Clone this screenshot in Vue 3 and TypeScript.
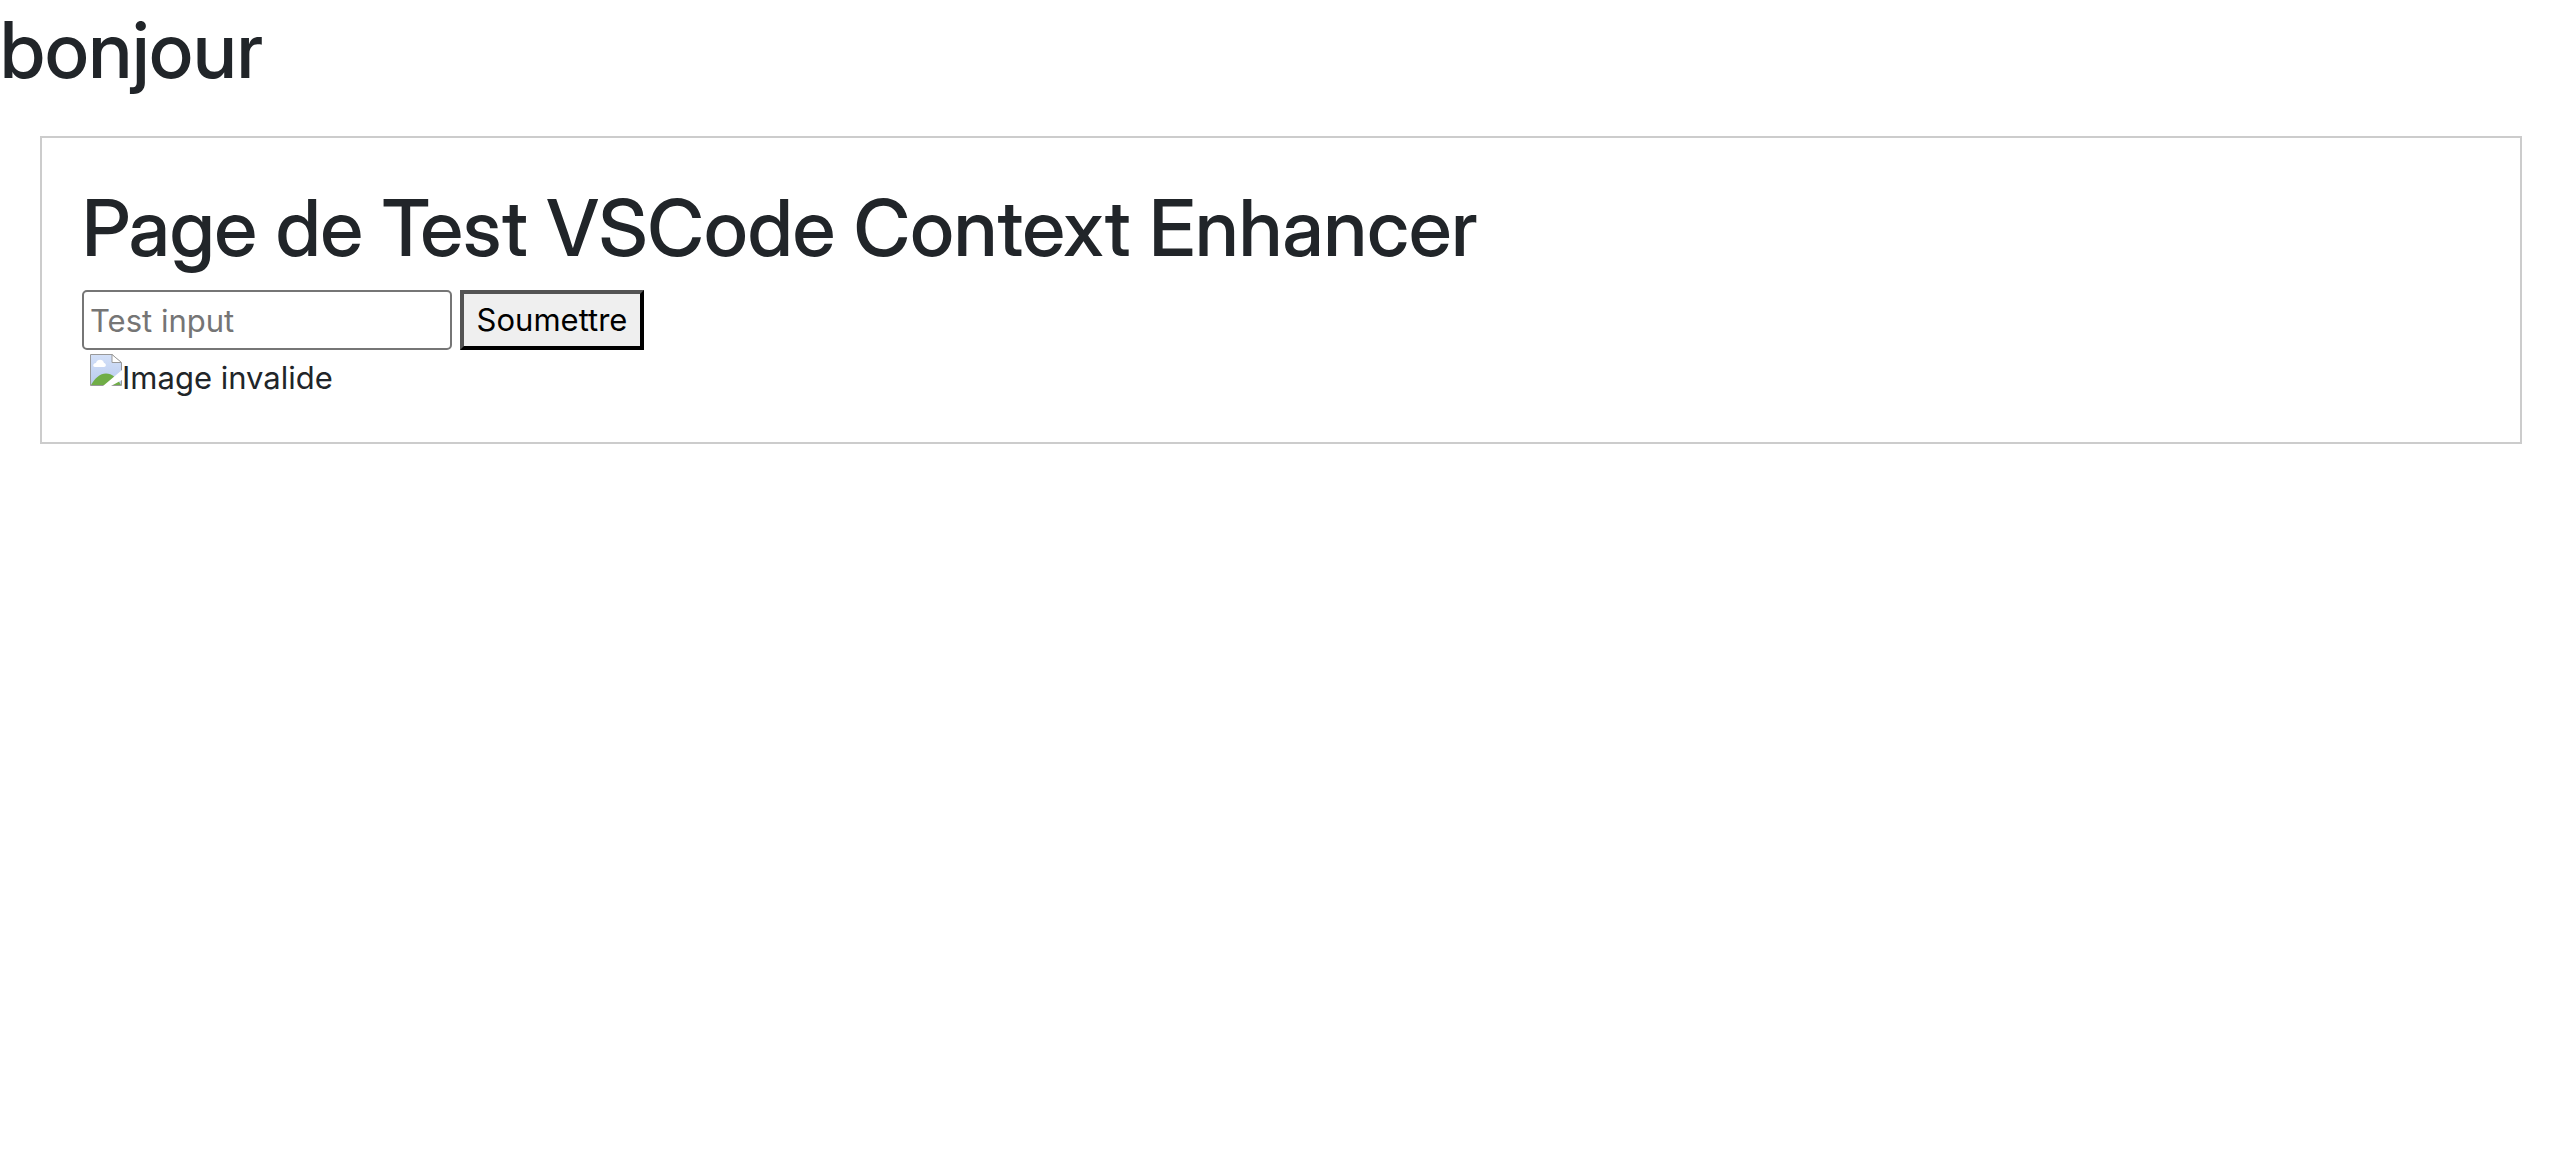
<script setup lang="ts">
import { ref } from 'vue'

const value = ref('')
</script>

<template>
  <main class="page">
    <h1>bonjour</h1>
    <section class="panel">
      <h1>Page de Test VSCode Context Enhancer</h1>
      <form class="controls" @submit.prevent>
        <input v-model="value" type="text" placeholder="Test input" aria-label="Test input" />
        <button type="submit">Soumettre</button>
      </form>
      <div class="missing">
        <svg viewBox="0 0 32 32" aria-hidden="true">
          <defs>
            <linearGradient id="sky" x1="0" y1="0" x2="0" y2="1">
              <stop offset="0" stop-color="#d3e0f8" />
              <stop offset="1" stop-color="#b9cbee" />
            </linearGradient>
          </defs>
          <path d="M1 1H22L31 9V31H1Z" fill="url(#sky)" />
          <path d="M1 31C5 24 10 19.500 16 19.500C22 19.500 27 24 31 31Z" fill="#70ad47" />
          <path d="M5 13C2.500 13 2.500 9.500 6 9C7 5 13 4.500 14 9C16.500 9.500 16.500 13 14 13Z" fill="#fff" />
          <path d="M0.500 31.500V0.500H22L31.500 9V31.500Z" fill="none" stroke="#999" />
          <path d="M22 0.500V8.500H31.500Z" fill="#fff" stroke="#999" />
          <path d="M13 32L32 16V26L21 32Z" fill="#fff" />
        </svg>
        <span>Image invalide</span>
      </div>
    </section>
  </main>
</template>

<style>
body {
  margin: 0;
  background: #fff;
}
</style>

<style scoped>
.page {
  display: flex;
  flex-direction: column;
  gap: 40px;
  color: #212529;
  font-family: Inter, "Liberation Sans", sans-serif;
  font-size: 31px;
  line-height: 48px;
}

h1 {
  margin: 0;
  padding-top: 4px;
  font-family: "Inter Display", Inter, "Liberation Sans", sans-serif;
  font-size: 78px;
  font-weight: 500;
  line-height: 92px;
}

.panel {
  margin: 0 40px 40px;
  padding: 40px;
  border: 2px solid #ccc;
}

.controls {
  display: flex;
  gap: 8px;
  margin-top: 16px;
}

input,
button {
  box-sizing: border-box;
  height: 60px;
  font: inherit;
}

input {
  width: 370px;
  padding: 2px 6px;
  border: 2px solid #767676;
  border-radius: 5px;
  background: #fff;
  color: #000;
}

input::placeholder {
  color: #757575;
  opacity: 1;
}

button {
  width: 184px;
  padding: 2px 12px;
  border: 4px outset #000;
  border-radius: 0;
  background: #efefef;
  color: #000;
}

.missing {
  display: flex;
  align-items: flex-start;
  padding: 4px 8px 0;
}

.missing svg {
  width: 32px;
  height: 32px;
}
</style>
